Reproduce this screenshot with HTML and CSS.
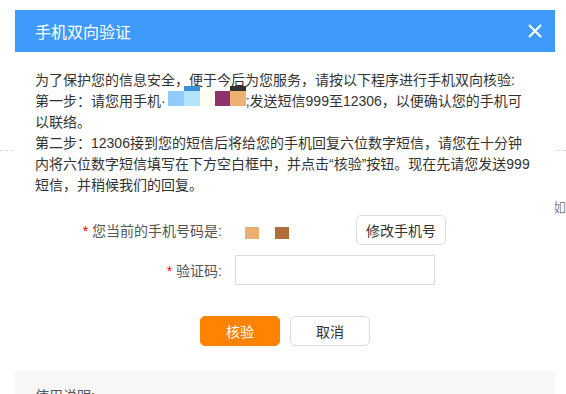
FILE: index.html
```html
<!DOCTYPE html>
<html lang="zh-CN">
<head>
    <meta charset="UTF-8">
    <meta name="viewport" content="width=device-width, initial-scale=1.0">
    <title>手机双向验证</title>
    <link rel="stylesheet" href="styles.css">
</head>
<body>

<!-- 背景页面 -->
<div class="page">
    <div class="page-rule"></div>
    <div class="page-side">如有疑问</div>
</div>

<!-- 弹窗 -->
<div class="dialog">
    <div class="dialog-head">
        <h2>手机双向验证</h2>
        <span class="dialog-close">
            <svg width="14" height="14" viewBox="0 0 14 14">
                <path d="M1 1 L13 13 M13 1 L1 13" stroke="#fff" stroke-width="2" fill="none"/>
            </svg>
        </span>
    </div>

    <div class="dialog-body">
        <div class="notice">
            <p>为了保护您的信息安全，便于今后为您服务，请按以下程序进行手机双向核验:</p>
            <p>第一步：请您用手机·<span class="mask"><i class="m1"></i><i class="m2"></i><i class="m3"></i><i class="m4"></i><i class="m5"></i></span>;发送短信999至12306，以便确认您的手机可以联络。</p>
            <p>第二步：12306接到您的短信后将给您的手机回复六位数字短信，请您在十分钟内将六位数字短信填写在下方空白框中，并点击“核验”按钮。现在先请您发送999短信，并稍候我们的回复。</p>
        </div>

        <div class="form">
            <div class="form-row">
                <label class="form-label"><em>*</em> 您当前的手机号码是:</label>
                <span class="phone"><i class="p1"></i><i class="p2"></i></span>
                <button class="btn btn-plain btn-edit">修改手机号</button>
            </div>
            <div class="form-row">
                <label class="form-label"><em>*</em> 验证码:</label>
                <input class="form-input" type="text">
            </div>
        </div>

        <div class="actions">
            <button class="btn btn-primary">核验</button>
            <button class="btn btn-plain">取消</button>
        </div>
    </div>

    <div class="dialog-help">使用说明:</div>
</div>

</body>
</html>
```

FILE: styles.css
```css
/* 全局样式 */
html, body {
    overflow: hidden;
}

body {
    margin: 0;
    padding: 0;
    background: #fff;
    color: #333;
    font-family: "Liberation Sans", "Noto Sans CJK SC", sans-serif;
    font-size: 14px;
}

/* 背景页面 */
.page {
    height: 394px;
}

.page-rule {
    margin-top: 150px;
    border-top: 1px dashed #d8d8d8;
}

.page-side {
    margin-top: 46px;
    padding-left: 553px;
    white-space: nowrap;
    color: #888;
    font-size: 13px;
}

/* 弹窗 */
.dialog {
    position: absolute;
    left: 15px;
    top: 10px;
    width: 540px;
    background: #fff;
}

.dialog-head {
    height: 42px;
    padding: 0 13px 0 20px;
    background: #3e9bfc;
    display: flex;
    align-items: center;
    justify-content: space-between;
}

.dialog-head h2 {
    margin: 0;
    color: #fff;
    font-size: 16px;
    font-weight: normal;
}

.dialog-close {
    display: flex;
    width: 14px;
    height: 14px;
}

.dialog-body {
    padding: 18px 22px 25px 20px;
}

/* 说明文字 */
.notice p {
    margin: 0;
    line-height: 21px;
}

.mask {
    display: inline-flex;
    vertical-align: top;
    margin: 0 0 0 2px;
}

.mask i {
    display: block;
    height: 15px;
}

.mask .m1 { width: 16px; background: #8fcbfb; }
.mask .m2 { width: 16px; background: #b3e4fd; box-shadow: 0 -5px 0 #3a92d4; }
.mask .m3 { width: 15px; background: #fffdef; }
.mask .m4 { width: 15px; background: #8d326c; }
.mask .m5 { width: 16px; background: #ecb173; box-shadow: 0 -5px 0 #333; }

/* 表单 */
.form {
    margin-top: 19px;
    display: flex;
    flex-direction: column;
    gap: 10px;
}

.form-row {
    display: flex;
    align-items: center;
    height: 30px;
}

.form-label {
    width: 187px;
    text-align: right;
    color: #555;
    margin-right: 13px;
}

.form-label em {
    color: #f00;
    font-style: normal;
}

.phone {
    width: 111px;
    padding: 5px 0 0 10px;
    display: flex;
    gap: 16px;
}

.phone i {
    display: block;
    width: 14px;
    height: 12px;
}

.phone .p1 { background: #ebb071; }
.phone .p2 { background: #b06d35; }

.form-input {
    box-sizing: border-box;
    width: 200px;
    height: 30px;
    border: 1px solid #ddd;
    margin: 0;
    padding: 0 6px;
    font: inherit;
}

/* 按钮 */
.btn {
    box-sizing: border-box;
    height: 30px;
    border-radius: 5px;
    font-family: inherit;
    font-size: 14px;
    cursor: pointer;
}

.btn-plain {
    background: #fff;
    border: 1px solid #ddd;
    color: #333;
}

.btn-edit {
    width: 90px;
    padding: 0;
}

.btn-primary {
    background: #ff8200;
    border: 1px solid #ff8200;
    color: #fff;
}

.actions {
    margin-top: 31px;
    display: flex;
    justify-content: center;
    gap: 10px;
    padding-left: 2px;
}

.actions .btn {
    width: 80px;
}

/* 使用说明 */
.dialog-help {
    background: #f7f7f7;
    padding: 15px 20px 40px;
    line-height: 21px;
    color: #555;
}
```
